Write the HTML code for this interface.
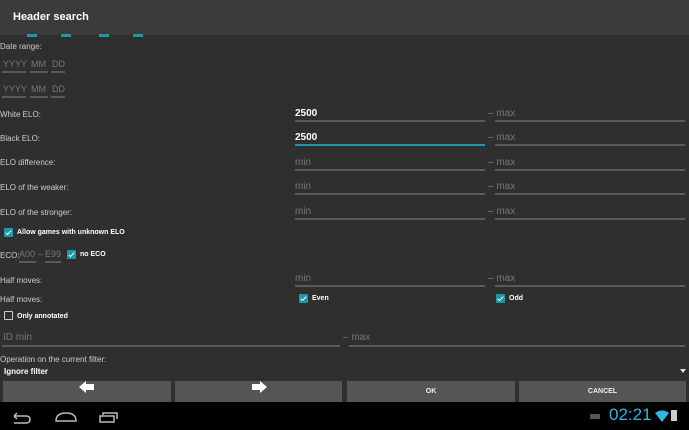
<html><head><style>
body{margin:0;width:689px;height:430px;background:#2f2f2f;font-family:"Liberation Sans",sans-serif;position:relative;overflow:hidden;color:#ddd}
.a{position:absolute;white-space:nowrap}
.l{font-size:8px;color:#ccc}
.h{font-size:10px;color:#777}
.u{position:absolute;height:2px;background:#5a5a5a}
.cb{position:absolute;width:9px;height:9px;background:#1a9aa6;border-radius:1px}
.cb:after{content:"";position:absolute;left:3px;top:1px;width:2px;height:5px;border:solid #fff;border-width:0 1.5px 1.5px 0;transform:rotate(45deg)}
.b{position:absolute;top:381px;height:21px;background:#555;color:#eee;font-size:7px;font-weight:bold;text-align:center;line-height:21px}
</style></head><body>
<div class="a" style="left:0;top:0;width:689px;height:35px;background:#3b3b3b"></div>
<div class="a" style="left:13px;top:11px;font-size:11px;color:#fff;font-weight:bold">Header search</div>
<div class="a" style="left:27px;top:34px;width:10px;height:3px;background:#1a9aa6"></div>
<div class="a" style="left:61px;top:34px;width:10px;height:3px;background:#1a9aa6"></div>
<div class="a" style="left:99px;top:34px;width:10px;height:3px;background:#1a9aa6"></div>
<div class="a" style="left:133px;top:34px;width:10px;height:3px;background:#1a9aa6"></div>
<div class="a l" style="left:0;top:42px">Date range:</div>
<div class="a h" style="left:3px;top:59px;font-size:9px">YYYY</div><div class="a h" style="left:31px;top:59px;font-size:9px">MM</div><div class="a h" style="left:52px;top:59px;font-size:9px">DD</div>
<div class="u" style="left:2px;top:71px;width:24px"></div><div class="u" style="left:30px;top:71px;width:18px"></div><div class="u" style="left:51px;top:71px;width:14px"></div>
<div class="a h" style="left:3px;top:84px;font-size:9px">YYYY</div><div class="a h" style="left:31px;top:84px;font-size:9px">MM</div><div class="a h" style="left:52px;top:84px;font-size:9px">DD</div>
<div class="u" style="left:2px;top:96px;width:24px"></div><div class="u" style="left:30px;top:96px;width:18px"></div><div class="u" style="left:51px;top:96px;width:14px"></div>

<div class="a l" style="left:0;top:110px">White ELO:</div>
<div class="a" style="left:295px;top:108px;font-size:10px;color:#fff;font-weight:bold">2500</div>
<div class="u" style="left:295px;top:120px;width:190px"></div>
<div class="a h" style="left:488px;top:108px">– max</div><div class="u" style="left:495px;top:120px;width:190px"></div>

<div class="a l" style="left:0;top:134px">Black ELO:</div>
<div class="a" style="left:295px;top:132px;font-size:10px;color:#fff;font-weight:bold">2500</div>
<div class="u" style="left:295px;top:144px;width:190px;background:#1a9aa6"></div>
<div class="a h" style="left:488px;top:132px">– max</div><div class="u" style="left:495px;top:144px;width:190px"></div>

<div class="a l" style="left:0;top:158px">ELO difference:</div>
<div class="a h" style="left:295px;top:157px">min</div><div class="u" style="left:295px;top:169px;width:190px"></div>
<div class="a h" style="left:488px;top:157px">– max</div><div class="u" style="left:495px;top:169px;width:190px"></div>

<div class="a l" style="left:0;top:183px">ELO of the weaker:</div>
<div class="a h" style="left:295px;top:181px">min</div><div class="u" style="left:295px;top:193px;width:190px"></div>
<div class="a h" style="left:488px;top:181px">– max</div><div class="u" style="left:495px;top:193px;width:190px"></div>

<div class="a l" style="left:0;top:208px">ELO of the stronger:</div>
<div class="a h" style="left:295px;top:206px">min</div><div class="u" style="left:295px;top:218px;width:190px"></div>
<div class="a h" style="left:488px;top:206px">– max</div><div class="u" style="left:495px;top:218px;width:190px"></div>

<div class="cb" style="left:4px;top:228px"></div>
<div class="a l" style="left:17px;top:229px;color:#fff;font-weight:bold;font-size:7px">Allow games with unknown ELO</div>
<div class="a l" style="left:0;top:251px">ECO:</div>
<div class="a h" style="left:19px;top:249px;font-size:9px">A00</div><div class="u" style="left:19px;top:261px;width:17px"></div>
<div class="a h" style="left:38px;top:249px;font-size:9px">–</div>
<div class="a h" style="left:45px;top:249px;font-size:9px">E99</div><div class="u" style="left:45px;top:261px;width:16px"></div>
<div class="cb" style="left:67px;top:250px"></div>
<div class="a l" style="left:80px;top:251px;color:#fff;font-weight:bold;font-size:7px">no ECO</div>

<div class="a l" style="left:0;top:276px">Half moves:</div>
<div class="a h" style="left:295px;top:273px">min</div><div class="u" style="left:295px;top:285px;width:190px"></div>
<div class="a h" style="left:488px;top:273px">– max</div><div class="u" style="left:495px;top:285px;width:190px"></div>
<div class="a l" style="left:0;top:295px">Half moves:</div>
<div class="cb" style="left:299px;top:294px"></div>
<div class="a l" style="left:312px;top:295px;color:#fff;font-weight:bold;font-size:7px">Even</div>
<div class="cb" style="left:496px;top:294px"></div>
<div class="a l" style="left:509px;top:295px;color:#fff;font-weight:bold;font-size:7px">Odd</div>
<div class="a" style="left:4px;top:311px;width:7px;height:7px;border:1.5px solid #ccc;border-radius:1px"></div>
<div class="a l" style="left:17px;top:313px;color:#fff;font-weight:bold;font-size:7px">Only annotated</div>
<div class="a h" style="left:3px;top:332px">ID min</div><div class="u" style="left:2px;top:345px;width:338px"></div>
<div class="a h" style="left:343px;top:332px">– max</div><div class="u" style="left:349px;top:345px;width:336px"></div>
<div class="a l" style="left:0;top:355px">Operation on the current filter:</div>
<div class="a" style="left:4px;top:367px;font-size:8px;color:#fff;font-weight:bold">Ignore filter</div>
<div class="a" style="left:680px;top:369px;width:0;height:0;border-left:3px solid transparent;border-right:3px solid transparent;border-top:4px solid #ddd"></div>

<div class="b" style="left:3px;width:168px"><svg width="16" height="12" viewBox="0 0 16 12" style="vertical-align:middle"><path d="M0 6L7 0V3H15V9H7V12Z" fill="#fff"/></svg></div>
<div class="b" style="left:175px;width:167px"><svg width="16" height="12" viewBox="0 0 16 12" style="vertical-align:middle"><path d="M16 6L9 0V3H1V9H9V12Z" fill="#fff"/></svg></div>
<div class="b" style="left:347px;width:168px">OK</div>
<div class="b" style="left:519px;width:167px">CANCEL</div>

<div class="a" style="left:0;top:402px;width:689px;height:28px;background:#000"></div>
<svg class="a" style="left:10px;top:407px" width="110" height="18" viewBox="0 0 110 18"><path d="M4 9H16Q20 9 20 12.5Q20 16 16 16H4M4 9L7 6M4 9L7 12" stroke="#bbb" stroke-width="1.5" fill="none"/><path d="M46 14H66Q66 6 56 6Q46 6 46 14Z" stroke="#bbb" stroke-width="1.5" fill="none"/><rect x="90" y="9" width="14" height="6" stroke="#bbb" stroke-width="1.5" fill="none"/><path d="M93 8V6H107V12" stroke="#bbb" stroke-width="1.5" fill="none"/></svg>
<div class="a" style="left:590px;top:414px;width:10px;height:5px;background:#555"></div>
<div class="a" style="left:609px;top:405px;font-size:17px;color:#33b5e5">02:21</div>
<svg class="a" style="left:655px;top:410px" width="14" height="12" viewBox="0 0 14 12"><path d="M0 3Q7 -2 14 3L7 12Z" fill="#33b5e5"/></svg>
<div class="a" style="left:671px;top:410px;width:6px;height:11px;background:#ccc"></div>
</body></html>
